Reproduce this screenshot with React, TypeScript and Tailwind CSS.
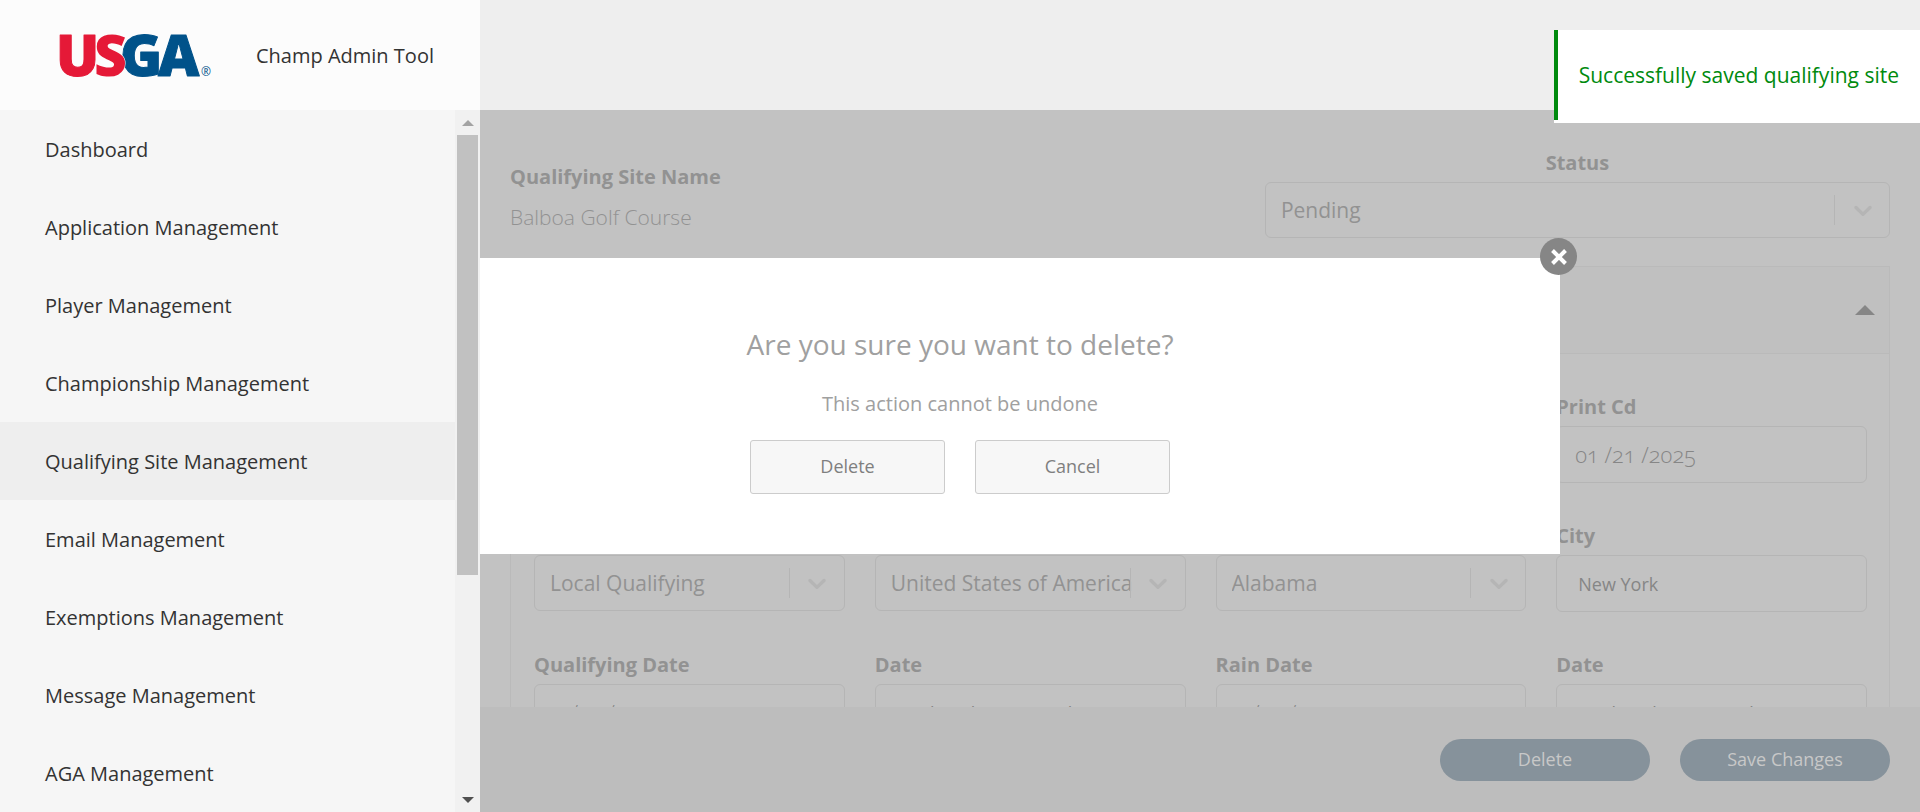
import type { ReactNode } from "react";

const navItems = [
  "Dashboard",
  "Application Management",
  "Player Management",
  "Championship Management",
  "Qualifying Site Management",
  "Email Management",
  "Exemptions Management",
  "Message Management",
  "AGA Management",
];

const activeItem = "Qualifying Site Management";

function Logo() {
  return (
    <svg
      className="h-[50px] w-[154px] overflow-visible font-['Open_Sans',sans-serif] text-[57px] font-extrabold"
      viewBox="0 0 154 50"
      role="img"
      aria-label="USGA"
      paintOrder="stroke"
      strokeLinejoin="round"
    >
      <text x="-4" y="46" fill="#e51937" stroke="#e51937" strokeWidth="1">U</text>
      <text x="60" y="46" fill="#00528a" stroke="#00528a" strokeWidth="1">G</text>
      <text x="98" y="46" fill="#00528a" stroke="#00528a" strokeWidth="1">A</text>
      <text x="34" y="46" fill="#e51937" stroke="#fcfcfc" strokeWidth="1">S</text>
      <text x="141" y="46" fill="#00528a" fontSize="12" fontWeight="400">®</text>
    </svg>
  );
}

function Sidebar() {
  return (
    <aside className="relative z-20 flex w-[480px] shrink-0 flex-col bg-[#f6f6f6]">
      <div className="flex h-[110px] shrink-0 items-center gap-[42px] bg-[#fcfcfc] pl-[60px]">
        <Logo />
        <span className="pt-[2px] text-xl text-[#333]">Champ Admin Tool</span>
      </div>
      <div className="flex min-h-0 flex-1">
        <nav className="flex-1 overflow-hidden">
          {navItems.map((item) => (
            <a
              key={item}
              href="#"
              aria-current={item === activeItem ? "page" : undefined}
              className="flex h-[78px] items-center pt-[2px] pl-[45px] text-xl text-[#333] aria-[current=page]:bg-[#eee]"
            >
              {item}
            </a>
          ))}
        </nav>
        <div className="flex w-[25px] flex-col items-center bg-[#f1f1f1]" aria-hidden="true">
          <div className="flex h-[25px] w-full shrink-0 items-center justify-center">
            <svg className="h-[6px] w-[12px]" viewBox="0 0 12 6"><path d="M6 0l6 6H0z" fill="#a3a3a3" /></svg>
          </div>
          <div className="min-h-0 flex-1">
            <div className="h-[67.5%] w-[21px] bg-[#c1c1c1]" />
          </div>
          <div className="flex h-[25px] w-full shrink-0 items-center justify-center">
            <svg className="h-[6px] w-[12px]" viewBox="0 0 12 6"><path d="M0 0h12L6 6z" fill="#505050" /></svg>
          </div>
        </div>
      </div>
    </aside>
  );
}

function SelectBox({ id, value, label }: { id: string; value: string; label?: string }) {
  return (
    <div className="relative">
      <select
        id={id}
        aria-label={label}
        className="block h-14 w-full appearance-none rounded-md border border-[#b5b5b5] bg-transparent pt-[2px] pl-[15px] text-[21px] text-[#929292]"
      >
        <option>{value}</option>
      </select>
      <div className="pointer-events-none absolute inset-y-0 right-0 flex w-14 items-center">
        <div className="h-[30px] w-px bg-[#b5b5b5]" />
        <svg className="mx-auto h-[30px] w-[30px]" viewBox="0 0 20 20" fill="#b5b5b5">
          <path d="M4.516 7.548c0.436-0.446 1.043-0.481 1.576 0l3.908 3.747 3.908-3.747c0.533-0.481 1.141-0.446 1.574 0 0.436 0.445 0.408 1.197 0 1.615-0.406 0.418-4.695 4.502-4.695 4.502-0.217 0.223-0.502 0.335-0.787 0.335s-0.57-0.112-0.789-0.335c0 0-4.287-4.084-4.695-4.502s-0.436-1.17 0-1.615z" />
        </svg>
      </div>
    </div>
  );
}

function Field({ id, label, children }: { id: string; label: string; children: ReactNode }) {
  return (
    <div>
      <label htmlFor={id} className="mb-[2px] block text-xl font-bold leading-[34px] text-[#929292]">
        {label}
      </label>
      {children}
    </div>
  );
}

const inputBase = "block h-[57px] w-full rounded-md border border-[#b5b5b5] bg-transparent";
const dateInput = inputBase + " pb-[2px] pl-[18px] text-[22px] font-light oldstyle-nums text-[#868686]";
const textInput = inputBase + " pl-[21px] text-lg text-[#868686]";

function SiteForm() {
  return (
    <div className="min-h-0 flex-1 overflow-hidden bg-[#c2c2c2] px-[30px] pt-[38px] text-[#929292]">
      <div className="flex justify-between">
        <div className="pt-[14px]">
          <h1 className="text-xl font-bold leading-[30px]">Qualifying Site Name</h1>
          <p className="pt-[10px] text-[21px] font-light leading-[30px]">Balboa Golf Course</p>
        </div>
        <div className="w-[45.3%]">
          <label htmlFor="status" className="mb-1 block text-center text-xl font-bold leading-[30px]">
            Status
          </label>
          <SelectBox id="status" value="Pending" />
        </div>
      </div>

      <section className="mt-7 border border-[#bababa]">
        <button
          type="button"
          aria-label="Toggle section"
          className="flex h-[87px] w-full items-center justify-end border-b border-[#bababa] bg-[#c0c0c0] pr-[14px]"
        >
          <svg className="h-[10px] w-[20px]" viewBox="0 0 20 10"><path d="M10 0l10 10H0z" fill="#868686" /></svg>
        </button>
        <div className="grid grid-cols-4 items-start gap-x-[30px] gap-y-9 pt-9 pr-[22px] pl-[23px]">
          <div className="col-start-4">
            <Field id="print-cd" label="Print Cd">
              <input id="print-cd" className={dateInput} defaultValue="01 /21 /2025" />
            </Field>
          </div>
          <div className="pt-9"><SelectBox id="type" value="Local Qualifying" label="Type" /></div>
          <div className="pt-9"><SelectBox id="country" value="United States of America" label="Country" /></div>
          <div className="pt-9"><SelectBox id="state" value="Alabama" label="State" /></div>
          <Field id="city" label="City">
            <input id="city" className={textInput} defaultValue="New York" />
          </Field>
          <Field id="qualifying-date" label="Qualifying Date">
            <input id="qualifying-date" className={dateInput} defaultValue="9 /10 /2025" />
          </Field>
          <Field id="qualifying-day" label="Date">
            <input id="qualifying-day" className={textInput} defaultValue="Wednesday, September 10" />
          </Field>
          <Field id="rain-date" label="Rain Date">
            <input id="rain-date" className={dateInput} defaultValue="9 /10 /2025" />
          </Field>
          <Field id="rain-day" label="Date">
            <input id="rain-day" className={textInput} defaultValue="Wednesday, September 10" />
          </Field>
        </div>
      </section>
    </div>
  );
}

function FooterButton({ children }: { children: ReactNode }) {
  return (
    <button type="button" className="h-[42px] w-[210px] rounded-full bg-[#86929b] pb-[2px] text-lg text-[#c8c8c8]">
      {children}
    </button>
  );
}

function DialogButton({ children }: { children: ReactNode }) {
  return (
    <button
      type="button"
      className="h-[54px] w-[195px] rounded-[3px] border border-[#ccc] bg-[#f7f7f7] pb-[2px] text-lg text-[#7f7f7f]"
    >
      {children}
    </button>
  );
}

function DeleteDialog() {
  return (
    <div className="pointer-events-none fixed inset-0 z-10 flex items-center justify-center">
      <div
        role="dialog"
        aria-labelledby="dialog-title"
        className="pointer-events-auto relative flex w-[1200px] flex-col items-center bg-white pt-[66px] pb-[60px]"
      >
        <h2 id="dialog-title" className="text-[28px] leading-10 text-[#a0a0a0]">
          Are you sure you want to delete?
        </h2>
        <p className="mt-[26px] text-xl leading-7 text-[#a0a0a0]">This action cannot be undone</p>
        <div className="mt-[22px] flex gap-[30px]">
          <DialogButton>Delete</DialogButton>
          <DialogButton>Cancel</DialogButton>
        </div>
        <button
          type="button"
          aria-label="Close"
          className="absolute -top-5 -right-[17px] flex h-[37px] w-[37px] items-center justify-center rounded-full bg-[#868686]"
        >
          <svg className="h-[16px] w-[16px]" viewBox="0 0 16 16" stroke="#fff" strokeWidth="4">
            <path d="M1.5 1.5l13 13M14.5 1.5l-13 13" />
          </svg>
        </button>
      </div>
    </div>
  );
}

export default function App() {
  return (
    <div className="flex h-screen overflow-hidden font-['Open_Sans',sans-serif]">
      <Sidebar />
      <main className="flex min-w-0 flex-1 flex-col">
        <header className="h-[110px] shrink-0 bg-[#eee]" />
        <SiteForm />
        <footer className="flex h-[105px] shrink-0 items-center justify-end gap-[30px] bg-[#bdbdbd] px-[30px]">
          <FooterButton>Delete</FooterButton>
          <FooterButton>Save Changes</FooterButton>
        </footer>
      </main>
      <DeleteDialog />
      <div role="status" className="fixed top-[30px] right-0 z-30 bg-white pb-[3px]">
        <p className="border-l-4 border-[#008a0e] px-[21px] py-[30px] text-[21px] leading-[30px] text-[#008a0e]">
          Successfully saved qualifying site
        </p>
      </div>
    </div>
  );
}
